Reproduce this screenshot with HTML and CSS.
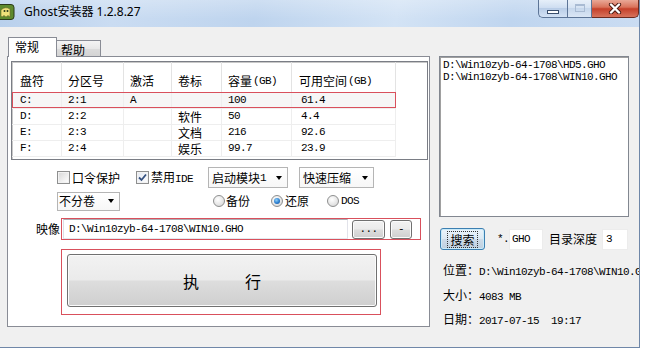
FILE: index.html
```html
<!DOCTYPE html>
<html lang="zh">
<head>
<meta charset="utf-8">
<title>Ghost安装器 1.2.8.27</title>
<link rel="stylesheet" href="styles.css">
</head>
<body>
<div class="window">
  <div class="titlebar">
    <svg class="appicon" width="16" height="18" viewBox="0 0 16 18">
      <rect x="-4" y="2.5" width="18" height="15" rx="3" fill="#5e8a2e" stroke="#2b3a1a"/>
      <path d="M1 8 Q5 4 10 7 L10 15 L8 13.5 L6 15 L4 13.5 L2 15 L1 14 Z" fill="#efe27a" stroke="#6b6a2a" stroke-width="0.6"/>
      <circle cx="4.5" cy="9" r="1" fill="#2b3a1a"/>
      <circle cx="7.5" cy="9" r="1" fill="#2b3a1a"/>
    </svg>
    <span class="title">Ghost安装器 1.2.8.27</span>
    <div class="caption">
      <span class="cb cb-min"><i></i></span>
      <span class="cb cb-max"><i></i></span>
      <span class="cb cb-close">
        <svg width="14" height="11" viewBox="0 0 14 11">
          <path d="M3 1.5 L11 9.5 M11 1.5 L3 9.5" stroke="#4a1a12" stroke-width="4.2" stroke-linecap="round"/>
          <path d="M3 1.5 L11 9.5 M11 1.5 L3 9.5" stroke="#ffffff" stroke-width="2.4" stroke-linecap="round"/>
        </svg>
      </span>
    </div>
  </div>
  <div class="client">
    <div class="left">
      <div class="tabs">
        <span class="tab tab-active">常规</span>
        <span class="tab">帮助</span>
      </div>
      <div class="panel">
        <div class="listview">
          <div class="lv-head">
            <span>盘符</span><span>分区号</span><span>激活</span><span>卷标</span><span>容量<b class="m">(GB)</b></span><span>可用空间<b class="m">(GB)</b></span><span></span>
          </div>
          <div class="lv-row lv-sel"><span class="m">C:</span><span class="m">2:1</span><span class="m">A</span><span></span><span class="m">100</span><span class="m">61.4</span></div>
          <div class="lv-row"><span class="m">D:</span><span class="m">2:2</span><span></span><span class="cj">软件</span><span class="m">50</span><span class="m">4.4</span></div>
          <div class="lv-row"><span class="m">E:</span><span class="m">2:3</span><span></span><span class="cj">文档</span><span class="m">216</span><span class="m">92.6</span></div>
          <div class="lv-row"><span class="m">F:</span><span class="m">2:4</span><span></span><span class="cj">娱乐</span><span class="m">99.7</span><span class="m">23.9</span></div>
        </div>

        <div class="opt-row opt-row1">
          <label class="chk"><span class="box"></span><span>口令保护</span></label>
          <label class="chk chk-ide"><span class="box box-on"><svg width="11" height="11" viewBox="0 0 11 11"><path d="M2 5.5 L4.5 8 L9 2.5" fill="none" stroke="#34507f" stroke-width="1.8"/></svg></span><span>禁用<span class="m">IDE</span></span></label>
          <span class="combo combo-boot">启动模块<span class="m">1</span><i class="arr"></i></span>
          <span class="combo combo-comp">快速压缩<i class="arr"></i></span>
        </div>

        <div class="opt-row opt-row2">
          <span class="combo combo-split">不分卷<i class="arr"></i></span>
          <label class="rad rad-backup"><span class="radio"></span><span>备份</span></label>
          <label class="rad rad-restore"><span class="radio radio-on"><i></i></span><span>还原</span></label>
          <label class="rad rad-dos"><span class="radio"></span><span class="m">DOS</span></label>
        </div>

        <div class="image-row">
          <span class="img-label">映像</span>
          <div class="redbox img-box">
            <span class="input img-input m">D:\Win10zyb-64-1708\WIN10.GHO</span>
            <span class="btn btn-browse m">...</span>
            <span class="btn btn-minus m">-</span>
          </div>
        </div>

        <div class="redbox exec-box">
          <span class="btn exec"><span>执</span><span>行</span></span>
        </div>
      </div>
    </div>

    <div class="right">
      <div class="listbox">
        <div class="m lb-line">D:\Win10zyb-64-1708\HD5.GHO</div>
        <div class="m lb-line">D:\Win10zyb-64-1708\WIN10.GHO</div>
      </div>
      <div class="search-row">
        <span class="btn btn-search"><span class="focus">搜索</span></span>
        <span class="m star">*.</span>
        <span class="input small-input ext-input m">GHO</span>
        <span class="depth-label">目录深度</span>
        <span class="input small-input depth-input m">3</span>
      </div>
      <div class="info">
        <div class="info-line info-loc">位置：<span class="m">D:\Win10zyb-64-1708\WIN10.G</span></div>
        <div class="info-line info-size">大小：<span class="m">4083 MB</span></div>
        <div class="info-line info-date">日期：<span class="m">2017-07-15  19:17</span></div>
      </div>
    </div>
  </div>
</div>
</body>
</html>
```

FILE: styles.css
```css
* { box-sizing: border-box; }
html, body { margin: 0; padding: 0; }
body {
  width: 647px;
  height: 353px;
  overflow: hidden;
  background: #ffffff;
  font-family: "Noto Sans CJK SC", "Noto Sans", sans-serif;
  font-size: 12px;
  line-height: 14px;
  color: #000;
}
.m {
  font-family: "Liberation Mono", "DejaVu Sans Mono", monospace;
  font-size: 11px;
  letter-spacing: -0.6px;
  font-weight: normal;
  white-space: pre;
}

.window {
  width: 640px;
  height: 348px;
  background: #f0f0f0;
  border-right: 1px solid #6f87a8;
  border-bottom: 1px solid #6f87a8;
  display: flex;
  flex-direction: column;
  overflow: hidden;
}

/* title bar */
.titlebar {
  height: 27px;
  flex: none;
  display: flex;
  align-items: flex-start;
  background:
    linear-gradient(180deg, rgba(255,255,255,0.25), rgba(255,255,255,0) 70%),
    linear-gradient(100deg, #b8d0ec 0%, #cadcf2 18%, #bed4ee 40%, #d3e3f5 62%, #bfd5ef 80%, #cadcf2 100%);
}
.appicon { flex: none; margin-top: 2px; }
.title {
  margin: 5px 0 0 8px;
  font-family: "Noto Sans", "Noto Sans CJK SC", sans-serif;
  font-size: 12px;
  line-height: 14px;
  color: #000;
}
.caption { margin-left: auto; display: flex; height: 18px; }
.cb {
  height: 18px;
  display: flex;
  align-items: center;
  justify-content: center;
  border: 1px solid #5d7597;
  border-top: none;
}
.cb-min {
  width: 29px;
  border-radius: 0 0 0 5px;
  border-right: none;
  background: linear-gradient(180deg, #e6eff9 0%, #cfdef1 45%, #b9cde7 50%, #d3e2f4 100%);
}
.cb-min i {
  display: block;
  width: 12px;
  height: 4px;
  margin-top: 7px;
  background: #fff;
  border: 1px solid #3a4e6c;
}
.cb-max {
  width: 25px;
  background: linear-gradient(180deg, #e8f0f9 0%, #d6e3f3 45%, #c6d7ec 50%, #dae6f5 100%);
}
.cb-max i {
  display: block;
  width: 10px;
  height: 8px;
  margin-top: -2px;
  border: 1px solid #a9bbd3;
  border-top-width: 2px;
}
.cb-close {
  width: 47px;
  border-left: none;
  border-color: #6b2a1f;
  border-radius: 0 0 5px 0;
  background: linear-gradient(180deg, #e9a897 0%, #d9735b 42%, #c5402a 52%, #d7735c 100%);
}

/* client */
.client { flex: 1; display: flex; }
.left { width: 430px; flex: none; padding: 10px 0 0 7px; }
.right { width: 209px; flex: none; display: flex; flex-direction: column; overflow: hidden; }

/* tabs */
.tabs { height: 19px; display: flex; align-items: flex-end; margin-left: 1px; }
.tab {
  height: 16px;
  width: 44px;
  padding: 2px 0 0 4px;
  border: 1px solid #898c95;
  border-left: none;
  border-bottom: none;
  background: linear-gradient(180deg, #f4f4f4 0%, #e8e8e8 50%, #dcdcdc 51%, #d4d4d4 100%);
}
.tab-active {
  height: 20px;
  width: 49px;
  margin-bottom: -1px;
  padding: 2px 0 0 6px;
  border-left: 1px solid #898c95;
  background: #fff;
  position: relative;
  z-index: 1;
}

.panel {
  width: 423px;
  height: 271px;
  border: 1px solid #898c95;
  background: #fff;
  padding-top: 4px;
}

/* list view */
.listview {
  margin-left: 3px;
  width: 417px;
  height: 99px;
  border: 1px solid #7a7d85;
  box-shadow: inset 1px 1px 0 #c8c8c8;
  background: #fff;
}
.lv-head {
  height: 30px;
  display: grid;
  grid-template-columns: 50px 62px 48px 50px 70px 104px 1fr;
}
.lv-head span {
  display: flex;
  align-items: flex-end;
  padding: 0 0 4px 6px;
  border-right: 1px solid #e3e3e3;
  white-space: nowrap;
}
.lv-head span:first-child { padding-left: 8px; }
.lv-head span:nth-child(6) { padding-left: 7px; }
.lv-head span:last-child { border-right: none; }
.lv-head b { margin-left: 1px; }
.lv-row {
  width: 384px;
  height: 16px;
  display: grid;
  grid-template-columns: 50px 62px 48px 50px 70px 104px;
}
.lv-row span {
  display: flex;
  align-items: center;
  padding-left: 6px;
  line-height: 15px;
  border-right: 1px solid #eeeeee;
  border-bottom: 1px solid #eeeeee;
}
.lv-row span.m { padding-top: 1px; }
.lv-row span.cj { line-height: 13px; }
.lv-row span:first-child { padding-left: 8px; }
.lv-row span:nth-child(6) { padding-left: 9px; }
.lv-sel {
  background: #f6f6f6;
  outline: 1px solid #d9505c;
  outline-offset: -1px;
}

/* option rows */
.opt-row { display: flex; align-items: center; padding-left: 49px; }
.opt-row1 { margin-top: 7px; height: 21px; }
.opt-row2 { margin-top: 3px; height: 20px; }

.chk { display: flex; align-items: center; }
.box {
  width: 13px;
  height: 13px;
  margin-right: 2px;
  border: 1px solid #8e8f8f;
  background: linear-gradient(135deg, #d6d6d6 0%, #f4f4f4 70%, #ffffff 100%);
  box-shadow: inset 0 0 0 1px #f2f2f2;
  display: flex;
  align-items: center;
  justify-content: center;
}
.box-on { background: linear-gradient(135deg, #e4e9f2 0%, #fdfdfd 100%); }
.chk-ide { margin-left: 16px; }

.combo {
  height: 21px;
  display: flex;
  align-items: center;
  padding-left: 3px;
  border: 1px solid #b5b5b5;
  background: linear-gradient(180deg, #ffffff 0%, #f7f7f7 100%);
  white-space: nowrap;
}
.arr {
  margin-left: auto;
  margin-right: 5px;
  width: 0;
  height: 0;
  border-left: 3.5px solid transparent;
  border-right: 3.5px solid transparent;
  border-top: 4px solid #000;
}
.combo-boot { margin-left: 15px; width: 80px; }
.combo-comp { margin-left: 11px; width: 75px; }
.combo-split { width: 63px; height: 19px; padding-left: 1px; }

.rad { display: flex; align-items: center; }
.radio {
  width: 12px;
  height: 12px;
  border-radius: 50%;
  border: 1px solid #8e8f8f;
  background: radial-gradient(circle at 40% 35%, #ffffff 0%, #e9e9e9 50%, #cfcfcf 100%);
  display: flex;
  align-items: center;
  justify-content: center;
  margin-right: 2px;
}
.radio-on i {
  display: block;
  width: 6px;
  height: 6px;
  border-radius: 50%;
  background: radial-gradient(circle at 40% 35%, #8fd0f8 0%, #2b7ed0 55%, #114b8f 100%);
}
.rad-backup { margin-left: 93px; }
.rad-backup .radio { margin-right: 1px; }
.rad-restore { margin-left: 21px; }
.rad-dos { margin-left: 18px; }

/* image row */
.image-row {
  margin-top: 7px;
  height: 22px;
  display: flex;
  align-items: center;
  padding-left: 28px;
}
.img-label { width: 24px; margin-right: 1px; }
.redbox { border: 1px solid #d9505c; }
.img-box {
  width: 360px;
  height: 22px;
  display: flex;
  align-items: center;
  padding-left: 1px;
}
.input {
  background: #fff;
  border: 1px solid #abadb3;
  border-color: #abadb3 #e2e3ea #e3e9ef #dbdfe6;
  display: flex;
  align-items: center;
}
.img-input { width: 285px; height: 20px; padding-left: 5px; }

.btn {
  display: flex;
  align-items: center;
  justify-content: center;
  border: 1px solid #707070;
  border-radius: 3px;
  background: linear-gradient(180deg, #f2f2f2 0%, #ebebeb 48%, #dddddd 52%, #cfcfcf 100%);
  box-shadow: inset 0 0 0 1px #fbfbfb;
}
.btn-browse { margin-left: 4px; width: 33px; height: 19px; }
.btn-minus { margin-left: 5px; width: 22px; height: 19px; }

.exec-box {
  margin: 9px 0 0 53px;
  width: 320px;
  height: 66px;
  padding: 4px 0 0 5px;
}
.exec {
  width: 310px;
  height: 53px;
  gap: 46px;
  font-size: 16px;
  line-height: 16px;
}

/* right column */
.listbox {
  margin: 29px 0 0 9px;
  width: 190px;
  height: 161px;
  flex: none;
  background: #fff;
  border: 1px solid #828790;
  box-shadow: inset 1px 1px 0 #a0a0a0;
  padding: 2px 0 0 3px;
}
.lb-line { display: block; height: 12px; line-height: 12px; }
.search-row {
  margin-top: 11px;
  height: 22px;
  padding-left: 10px;
  display: flex;
  align-items: center;
  flex: none;
}
.btn-search {
  width: 45px;
  height: 22px;
  border-color: #3c7fb1;
  background: linear-gradient(180deg, #eaf4fb 0%, #dde9f3 48%, #cddbe8 52%, #bfd0e0 100%);
  box-shadow: inset 0 0 0 1px #c9eaf9;
}
.focus { border: 1px dotted #333; padding: 1px 2px; line-height: 13px; }
.star { margin-left: 12px; width: 12px; }
.small-input { height: 21px; border: 1px solid #ececec; padding-left: 2px; }
.ext-input { width: 34px; }
.depth-label { margin-left: 6px; }
.depth-input { margin-left: 5px; width: 26px; padding-left: 3px; }

.info { padding-left: 13px; }
.info-line { height: 16px; line-height: 16px; white-space: nowrap; }
.info-loc { margin-top: 12px; }
.info-size { margin-top: 9px; }
.info-date { margin-top: 8px; }
```
